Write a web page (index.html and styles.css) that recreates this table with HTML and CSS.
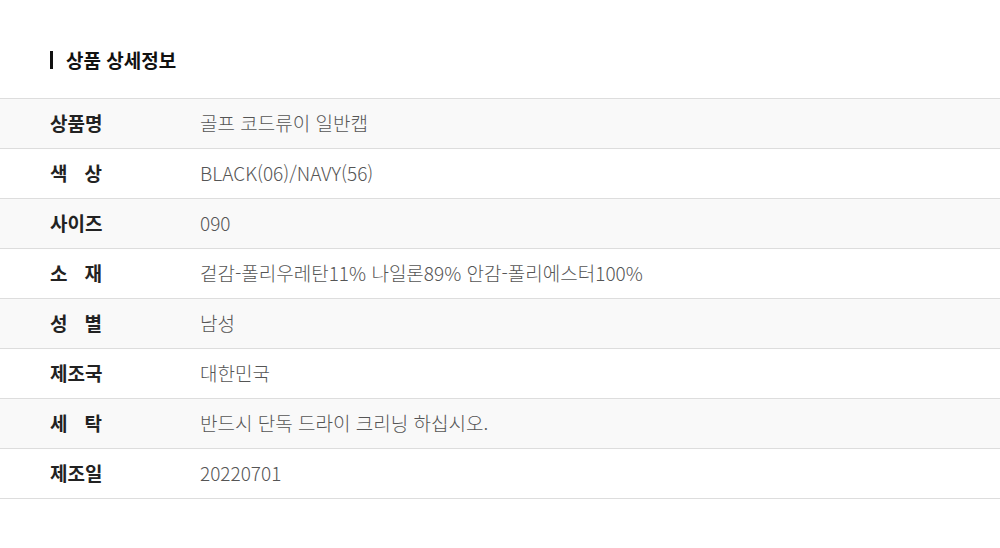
FILE: index.html
```html
<!DOCTYPE html>
<html lang="ko">
<head>
<meta charset="utf-8">
<link rel="stylesheet" href="styles.css">
</head>
<body>
<section class="detail">
  <h2 class="title">상품 상세정보</h2>
  <div class="table">
    <div class="row alt"><div class="label">상품명</div><div class="value">골프 코드류이 일반캡</div></div>
    <div class="row"><div class="label spread"><span>색</span><span>상</span></div><div class="value">BLACK(06)/NAVY(56)</div></div>
    <div class="row alt"><div class="label">사이즈</div><div class="value">090</div></div>
    <div class="row"><div class="label spread"><span>소</span><span>재</span></div><div class="value">겉감-폴리우레탄11% 나일론89% 안감-폴리에스터100%</div></div>
    <div class="row alt"><div class="label spread"><span>성</span><span>별</span></div><div class="value">남성</div></div>
    <div class="row"><div class="label">제조국</div><div class="value">대한민국</div></div>
    <div class="row alt"><div class="label spread"><span>세</span><span>탁</span></div><div class="value">반드시 단독 드라이 크리닝 하십시오.</div></div>
    <div class="row"><div class="label">제조일</div><div class="value">20220701</div></div>
  </div>
</section>
</body>
</html>
```
FILE: styles.css
```css
* { box-sizing: border-box; }
body {
  margin: 0;
  background: #fff;
  font-family: "Noto Sans CJK KR", "Noto Sans", sans-serif;
}
.detail {
  padding-top: 51px;
}
.title {
  margin: 0 0 29px 50px;
  padding-left: 13px;
  border-left: 3px solid #111;
  font-size: 19px;
  font-weight: 700;
  line-height: 18px;
  height: 18px;
  color: #111;
  display: flex;
  align-items: center;
}
.table {
  border-top: 1px solid #ddd;
}
.row {
  display: flex;
  align-items: center;
  height: 50px;
  border-bottom: 1px solid #ddd;
  padding-left: 50px;
  padding-bottom: 2px;
}
.row.alt { background: #f9f9f9; }
.label {
  width: 150px;
  font-size: 19px;
  font-weight: 700;
  color: #222;
}
.label.spread {
  display: flex;
  justify-content: space-between;
  width: 52px;
  margin-right: 98px;
}
.value {
  font-size: 19px;
  font-weight: 300;
  color: #555;
}
```
